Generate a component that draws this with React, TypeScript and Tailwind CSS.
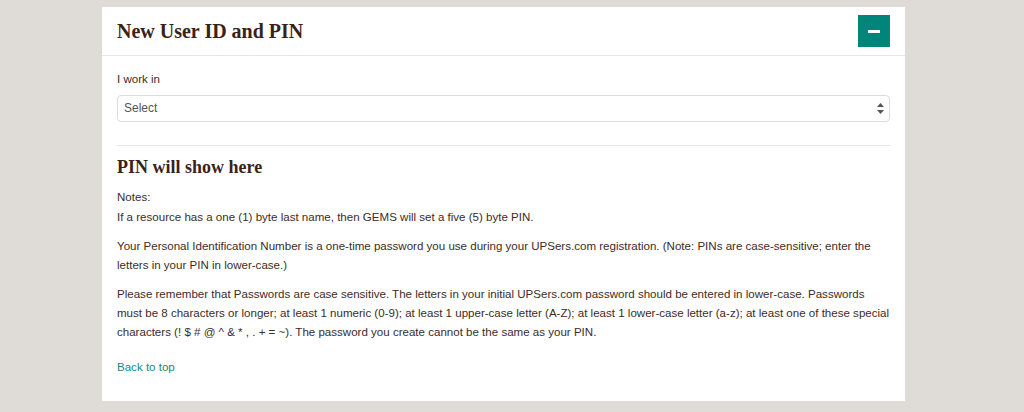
const App = () => {
  return (
    <div className="min-h-screen bg-[#dfdcd7] pt-[7px] pb-[11px] font-['Liberation_Sans',Arial,sans-serif] text-[11.55px] leading-[19px] text-[#3d2b26]">
      <div className="ml-[102px] w-[803px] bg-white">
        <div className="flex h-[49px] items-center justify-between border-b border-[#e6e6e6] pl-[15px] pr-[15px]">
          <h2 className="font-['Liberation_Serif',Georgia,serif] text-[20px] font-bold text-[#3b1f1a]">
            New User ID and PIN
          </h2>
          <button className="flex h-8 w-8 items-center justify-center bg-[#00857a]" aria-label="Collapse">
            <span className="block h-[3px] w-[12px] bg-white" />
          </button>
        </div>

        <div className="pl-[15px] pr-[14px] pt-[14px] pb-[24px]">
          <label className="block">I work in</label>
          <div className="relative mt-[6px] mr-px">
            <select className="h-[27px] w-full appearance-none rounded-[4px] border border-[#dcdcdc] bg-white pl-[6px] text-[12px] text-[#555]">
              <option>Select</option>
            </select>
            <svg className="pointer-events-none absolute right-[6px] top-[8px]" width="7" height="11" viewBox="0 0 7 11">
              <path d="M3.5 0 L7 4 L0 4 Z" fill="#555" />
              <path d="M3.5 11 L7 7 L0 7 Z" fill="#555" />
            </svg>
          </div>

          <hr className="mt-[23px] mr-px border-t border-[#e6e6e6]" />

          <h3 className="mt-[9px] font-['Liberation_Serif',Georgia,serif] text-[18px] font-bold leading-[24px] text-[#3b1f1a]">
            PIN will show here
          </h3>
          <p className="mt-[9px] mb-[1px]">Notes:</p>
          <p className="mb-[10px]">
            If a resource has a one (1) byte last name, then GEMS will set a five (5) byte PIN.
          </p>
          <p className="mb-[10px]">
            Your Personal Identification Number is a one-time password you use during your UPSers.com registration. (Note: PINs are case-sensitive; enter the letters in your PIN in lower-case.)
          </p>
          <p>
            Please remember that Passwords are case sensitive. The letters in your initial UPSers.com password should be entered in lower-case. Passwords must be 8 characters or longer; at least 1 numeric (0-9); at least 1 upper-case letter (A-Z); at least 1 lower-case letter (a-z); at least one of these special characters (! $ # @ ^ &amp; * , . + = ~). The password you create cannot be the same as your PIN.
          </p>
          <a href="#" className="mt-[16px] inline-block text-[#15897f]">
            Back to top
          </a>
        </div>
      </div>
    </div>
  );
};

export default App;
